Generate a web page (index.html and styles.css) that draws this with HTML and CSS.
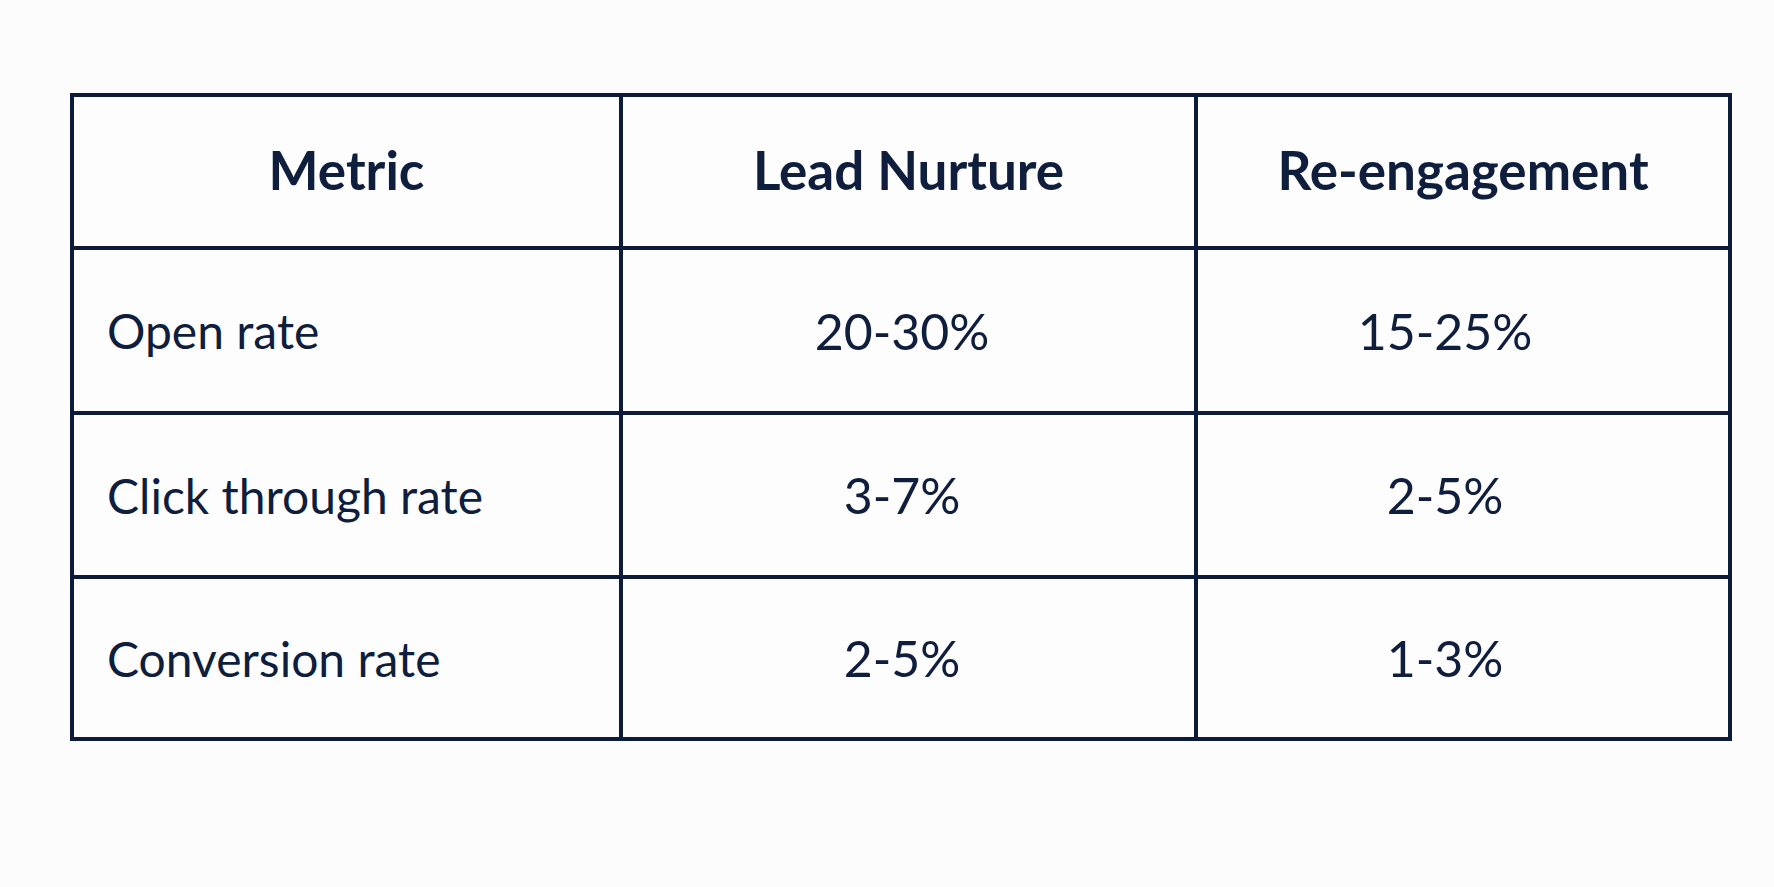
FILE: index.html
```html
<!DOCTYPE html>
<html lang="en">
<head>
<meta charset="utf-8">
<title>Email metrics</title>
<link rel="stylesheet" href="styles.css">
</head>
<body>
<div class="page">
  <div class="metrics-table" role="table">
    <div class="cell head first" role="columnheader">Metric</div>
    <div class="cell head" role="columnheader">Lead Nurture</div>
    <div class="cell head" role="columnheader">Re-engagement</div>

    <div class="cell label" role="cell">Open rate</div>
    <div class="cell value col2" role="cell">20-30%</div>
    <div class="cell value col3" role="cell">15-25%</div>

    <div class="cell label" role="cell">Click through rate</div>
    <div class="cell value col2" role="cell">3-7%</div>
    <div class="cell value col3" role="cell">2-5%</div>

    <div class="cell label" role="cell">Conversion rate</div>
    <div class="cell value col2" role="cell">2-5%</div>
    <div class="cell value col3" role="cell">1-3%</div>
  </div>
</div>
</body>
</html>
```

FILE: styles.css
```css
html, body {
  margin: 0;
  padding: 0;
  background: #fcfcfd;
}

body {
  width: 1774px;
  height: 887px;
  overflow: hidden;
  font-family: "Lato", "Noto Sans", sans-serif;
  color: #0f1e3c;
}

.page {
  padding: 93px 0 0 70px;
}

.metrics-table {
  display: grid;
  grid-template-columns: 545px 571px 530px;
  grid-template-rows: 149px 161px 160px 158px;
  gap: 4px;
  padding: 4px;
  width: 1654px;
  background: #0d1b3a;
}

.cell {
  background: #fdfdfe;
  display: flex;
  align-items: center;
  justify-content: center;
  white-space: nowrap;
}

.head {
  font-weight: 700;
  font-size: 53px;
  padding-bottom: 4px;
}

.label {
  justify-content: flex-start;
  padding-left: 33px;
  font-size: 48px;
}

.value {
  font-size: 50px;
}

.col2 {
  padding-right: 13px;
}

.col3 {
  padding-right: 36px;
}
```
